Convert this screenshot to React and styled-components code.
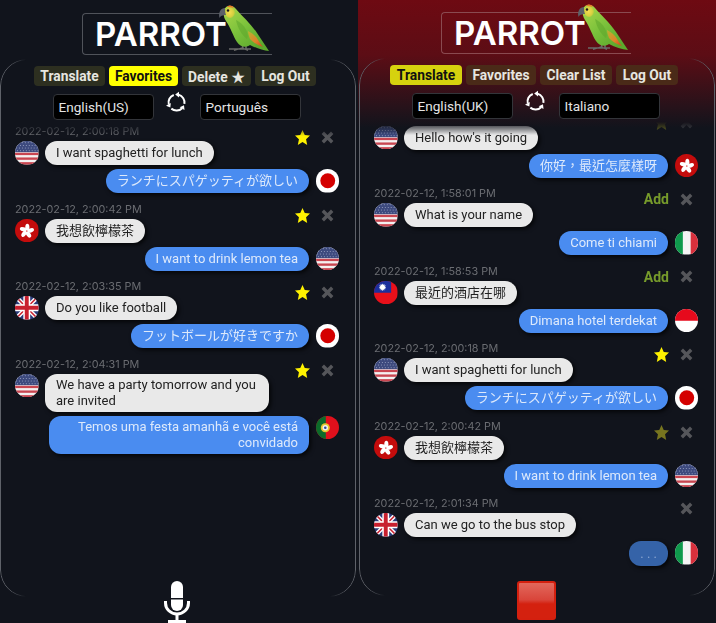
import styled, { createGlobalStyle } from "styled-components";

const GlobalStyle = createGlobalStyle`
  html, body {
    margin: 0;
    height: 623px;
    overflow: hidden;
    background: #11141c;
  }
  * {
    box-sizing: border-box;
  }
`;

const Page = styled.div`
  display: flex;
  width: 716px;
  height: 623px;
  font-family: Roboto, "Noto Sans CJK TC", sans-serif;
`;

const Panel = styled.div`
  width: 358px;
  height: 623px;
  overflow: hidden;
  display: flex;
  flex-direction: column;
  align-items: flex-start;
  padding-left: ${(p) => p.$inset}px;
  padding-top: ${(p) => p.$top}px;
  background: ${(p) =>
    p.$alert
      ? "linear-gradient(#6e0a12 0, #5c0d15 55px, #11141c 128px)"
      : "#11141c"};
`;

const Logo = styled.div`
  position: relative;
  width: 190px;
  height: 42px;
  margin-left: 82px;
  padding-left: 12px;
  display: flex;
  align-items: center;
  color: #fff;
  font-family: Inter, sans-serif;
  font-size: 33px;
  font-weight: 600;
  border: 1.5px solid ${(p) => (p.$alert ? "#8a4a50" : "#50535a")};
  border-right: 0;
  border-radius: 4px 0 0 4px;
`;

const ParrotArt = styled.svg`
  position: absolute;
  left: 135px;
  top: -10px;
`;

const Card = styled.div`
  position: relative;
  width: 356px;
  height: 538px;
  margin-top: 4px;
  padding: 7px 1px 0;
  display: flex;
  flex-direction: column;

  &::before {
    content: "";
    position: absolute;
    inset: 0;
    border: 1px solid #5f6269;
    border-radius: 27px;
    pointer-events: none;
    mask-image: linear-gradient(
      to right,
      #000 8px,
      transparent 26px,
      transparent calc(100% - 26px),
      #000 calc(100% - 8px)
    );
  }
`;

const Tabs = styled.div`
  display: flex;
  justify-content: center;
  gap: 4px;
  padding-right: 6px;
`;

const Tab = styled.div`
  height: 20px;
  width: ${(p) => p.$w}px;
  display: flex;
  align-items: center;
  justify-content: center;
  border-radius: 4px;
  font-size: 13.8px;
  font-weight: 700;
  white-space: nowrap;
  color: ${(p) => (p.$active ? "#111" : "#e6e6e0")};
  background: ${(p) => {
    if (p.$active) return p.$alert ? "#d6d20e" : "#ffff00";
    return p.$alert ? "#4a2a18" : "#2d2f20";
  }};
`;

const LangRow = styled.div`
  display: flex;
  justify-content: center;
  align-items: flex-start;
  gap: 11.5px;
  margin-top: 8px;
  padding-right: 3px;
`;

const LangBox = styled.div`
  width: 101px;
  height: 26px;
  padding-left: 5px;
  display: flex;
  align-items: center;
  background: #000;
  border: 1px solid #33353a;
  border-radius: 4px;
  color: #e4e4e4;
  font-size: 13.6px;
`;

const SwapIcon = styled.svg`
  margin-top: -3px;
`;

const List = styled.div`
  flex: 1;
  min-height: 0;
  margin-top: 3px;
  padding: 0 16px 0 14px;
  overflow: hidden;
  mask-image: linear-gradient(to bottom, transparent, #000 13px);
`;

const ListInner = styled.div`
  margin-top: ${(p) => p.$offset}px;
`;

const Entry = styled.div`
  margin-bottom: 8.5px;
`;

const EntryHead = styled.div`
  height: 14px;
  margin-bottom: 3px;
  display: flex;
  justify-content: space-between;
  align-items: flex-start;
`;

const Stamp = styled.div`
  margin-top: 1px;
  font-family: Inter, sans-serif;
  font-size: 10.8px;
  line-height: 14px;
  color: #6b6d72;
`;

const Actions = styled.div`
  display: flex;
  align-items: center;
  justify-content: flex-end;
  gap: 11px;
  margin-top: 6px;
  padding-right: 5px;
`;

const AddLink = styled.span`
  color: #769a2b;
  font-size: 14px;
  font-weight: 700;
  line-height: 14px;
`;

const Row = styled.div`
  display: flex;
  align-items: flex-start;
  gap: 6.5px;
  margin-bottom: 4px;
  justify-content: ${(p) => (p.$out ? "flex-end" : "flex-start")};
`;

const Bubble = styled.div`
  min-height: 24px;
  padding: 3px 11px;
  display: flex;
  align-items: center;
  font-size: 13px;
  line-height: 16px;
  border-radius: 12px;
  box-shadow: 2px 2px 4px rgba(0, 0, 0, 0.75);
  color: ${(p) => (p.$out ? "#dde9fb" : "#222")};
  background: ${(p) => (p.$out ? "#4a8cf0" : "#e9e9e9")};
  max-width: ${(p) => (p.$out ? 260 : 224)}px;
  text-align: ${(p) => (p.$out ? "right" : "left")};
`;

const TypingBubble = styled(Bubble)`
  height: 25px;
  padding: 0 11px;
  background: #3563a8;
  color: #8aa5d0;
`;

const FlagArt = styled.svg`
  flex: none;
  border-radius: 50%;
  display: block;
`;

const Control = styled.div`
  width: 354px;
  flex: none;
  display: flex;
  justify-content: center;
  margin-top: ${(p) => p.$lift}px;
`;

const StopButton = styled.div`
  width: 39px;
  height: 39px;
  border: 2px solid #d4200f;
  border-radius: 3px;
  background: linear-gradient(#e2685c 0, #d9453a 48%, #d4210f 60%, #d4210f);
`;

function UsFlag() {
  const stars = [];
  for (let r = 0; r < 4; r++) {
    for (let c = 0; c < 8; c++) {
      stars.push(<circle key={`${r}-${c}`} cx={1.5 + c * 3 + (r % 2)} cy={1.8 + r * 2.7} r="0.5" fill="#c8cfe6" />);
    }
  }
  return (
    <>
      <rect width="24" height="24" fill="#f4f0f0" />
      <rect y="12" width="24" height="2.4" fill="#c94550" />
      <rect y="16.8" width="24" height="2.4" fill="#c94550" />
      <rect y="21.6" width="24" height="2.4" fill="#c94550" />
      <rect width="24" height="11.4" fill="#3d4a7e" />
      {stars}
    </>
  );
}

function HkFlag() {
  return (
    <>
      <rect width="24" height="24" fill="#c40c0c" />
      {[0, 72, 144, 216, 288].map((a) => (
        <ellipse key={a} cx="12.6" cy="8.4" rx="2.1" ry="3.6" fill="#fff" transform={`rotate(${a} 12 12.3)`} />
      ))}
      <circle cx="12" cy="12.3" r="0.9" fill="#e88" />
    </>
  );
}

function GbFlag() {
  return (
    <>
      <rect width="24" height="24" fill="#2a3a78" />
      <path d="M0 0L24 24M24 0L0 24" stroke="#fff" strokeWidth="4.4" />
      <path d="M0 0L24 24M24 0L0 24" stroke="#c8202f" strokeWidth="1.6" />
      <path d="M12 0V24M0 12H24" stroke="#fff" strokeWidth="7" />
      <path d="M12 0V24M0 12H24" stroke="#c8202f" strokeWidth="4" />
    </>
  );
}

function PtFlag() {
  return (
    <>
      <rect width="24" height="24" fill="#e0101c" />
      <rect width="10" height="24" fill="#0b6b2a" />
      <circle cx="9.5" cy="12" r="4.6" fill="#e6c832" />
      <circle cx="9.5" cy="12" r="2.8" fill="#f2f2f2" />
      <circle cx="9.5" cy="12" r="1.3" fill="#2a4a9a" />
    </>
  );
}

function TwFlag() {
  return (
    <>
      <rect width="24" height="24" fill="#e8101a" />
      <rect width="17.5" height="12" fill="#1b2f9c" />
      {[0, 30, 60, 90, 120, 150].map((a) => (
        <rect key={a} x="5.2" y="6" width="7" height="0.8" fill="#fff" transform={`rotate(${a} 8.7 6.4)`} />
      ))}
      <circle cx="8.7" cy="6.4" r="2.5" fill="#fff" />
    </>
  );
}

const flagArt = {
  us: <UsFlag />,
  hk: <HkFlag />,
  gb: <GbFlag />,
  pt: <PtFlag />,
  tw: <TwFlag />,
  jp: (
    <>
      <rect width="24" height="24" fill="#fff" />
      <circle cx="12" cy="12" r="7.6" fill="#d40000" />
    </>
  ),
  id: (
    <>
      <rect width="24" height="24" fill="#fff" />
      <rect width="24" height="12" fill="#e60a1c" />
    </>
  ),
  it: (
    <>
      <rect width="24" height="24" fill="#f4f4f4" />
      <rect width="8" height="24" fill="#0f9a4c" />
      <rect x="16" width="8" height="24" fill="#d8303c" />
    </>
  ),
};

function Flag({ code }) {
  return (
    <FlagArt width="23.5" height="23.5" viewBox="0 0 24 24">
      {flagArt[code]}
    </FlagArt>
  );
}

function Star({ dim }) {
  return (
    <svg width="15" height="15" viewBox="0 0 24 24">
      <polygon
        points="12,0 15.6,8 24,8.8 17.7,14.6 19.5,24 12,19 4.5,24 6.3,14.6 0,8.8 8.4,8"
        fill={dim ? "#77751f" : "#fff200"}
      />
    </svg>
  );
}

function Cross() {
  return (
    <svg width="13" height="13" viewBox="0 0 13 13">
      <path d="M1.8 1.8L11.2 11.2M11.2 1.8L1.8 11.2" stroke="#55565a" strokeWidth="3.4" />
    </svg>
  );
}

function Parrot() {
  return (
    <ParrotArt width="54" height="50" viewBox="0 0 54 50">
      <defs>
        <linearGradient id="parrotBody" x1="0.1" y1="0" x2="0.8" y2="0.9">
          <stop offset="0" stopColor="#a8d648" />
          <stop offset="0.5" stopColor="#7cc23c" />
          <stop offset="1" stopColor="#5ca82c" />
        </linearGradient>
        <linearGradient id="parrotTail" x1="0" y1="0" x2="1" y2="1">
          <stop offset="0" stopColor="#b8b42e" />
          <stop offset="0.6" stopColor="#e0802a" />
          <stop offset="1" stopColor="#d0401e" />
        </linearGradient>
        <radialGradient id="parrotHead" cx="0.45" cy="0.5" r="0.6">
          <stop offset="0" stopColor="#f5dc50" />
          <stop offset="0.65" stopColor="#d8d040" />
          <stop offset="1" stopColor="#a4c83e" />
        </radialGradient>
      </defs>
      <path d="M11 45H33M16 46.5L24 44L30 46.5" stroke="#6a6a68" strokeWidth="1.3" fill="none" />
      <path d="M24 38L25 45M28 39L28 45" stroke="#6a6a68" strokeWidth="1.6" fill="none" />
      <path
        d="M6 6C8 1 14 0 18 5C24 12 33 20 39 29C43 35 47 41 51 47C45 46.5 38 44 32 41C28 44 22 43 19 38C15 32 13 24 8 17C6 14 5 10 6 6Z"
        fill="url(#parrotBody)"
      />
      <path d="M30 27C34 29 38 32 40 36C41.5 38.5 43 40.5 45 43C40 41.5 35 38.5 32 35C31 32 30 30 30 27Z" fill="url(#parrotTail)" />
      <path d="M18 16C22 18 27 22 29 28C30 31 30 33 29 35C25 32 20 26 18 16Z" fill="#5fa52c" opacity="0.55" />
      <path d="M7 8C8 3 13 1 16 5C18 8 17 12 13 14C10 14 7 12 7 8Z" fill="url(#parrotHead)" />
      <path d="M9 3C11 1 14 1 16 4C13 3 11 3 9 3Z" fill="#e8782a" />
      <path d="M7 4C3 4 0 8 1.5 14C3 11 6 11 8 11C7 9 7 6 7 4Z" fill="#5c6068" />
      <circle cx="10" cy="6.5" r="1.2" fill="#1b1b1b" />
    </ParrotArt>
  );
}

function SwapArrows() {
  return (
    <SwapIcon width="23" height="23" viewBox="-1 -1 23 23">
      {[0, 120, 240].map((a) => (
        <g key={a} transform={`rotate(${a} 10.5 10.5)`}>
          <path d="M12.6 2.8A8 8 0 0 1 18.4 11.9" stroke="#fff" strokeWidth="2" fill="none" />
          <polygon points="9.2,2.6 13,-0.2 13,5.4" fill="#fff" />
        </g>
      ))}
    </SwapIcon>
  );
}

function Mic() {
  return (
    <svg width="26" height="42" viewBox="0 0 26 42">
      <rect x="7" y="0" width="12" height="30" rx="6" fill="#fff" />
      <rect x="7" y="17" width="12" height="1.5" fill="#11141c" />
      <path d="M1.5 20V22A11.5 11 0 0 0 24.5 22V20" stroke="#fff" strokeWidth="3" fill="none" />
      <rect x="11.5" y="33" width="3" height="7" fill="#fff" />
      <rect x="4" y="39" width="18" height="3" fill="#fff" />
    </svg>
  );
}

const favorites = [
  {
    time: "2022-02-12, 2:00:18 PM",
    from: "us",
    text: "I want spaghetti for lunch",
    to: "jp",
    reply: "ランチにスパゲッティが欲しい",
    star: "on",
  },
  {
    time: "2022-02-12, 2:00:42 PM",
    from: "hk",
    text: "我想飲檸檬茶",
    to: "us",
    reply: "I want to drink lemon tea",
    star: "on",
  },
  {
    time: "2022-02-12, 2:03:35 PM",
    from: "gb",
    text: "Do you like football",
    to: "jp",
    reply: "フットボールが好きですか",
    star: "on",
  },
  {
    time: "2022-02-12, 2:04:31 PM",
    from: "us",
    text: "We have a party tomorrow and you are invited",
    to: "pt",
    reply: "Temos uma festa amanhã e você está convidado",
    star: "on",
  },
];

// first entry is scrolled, its time stamp is out of view
const history = [
  {
    time: "",
    from: "us",
    text: "Hello how's it going",
    to: "hk",
    reply: "你好，最近怎麼樣呀",
    star: "dim",
  },
  {
    time: "2022-02-12, 1:58:01 PM",
    from: "us",
    text: "What is your name",
    to: "it",
    reply: "Come ti chiami",
    star: "add",
  },
  {
    time: "2022-02-12, 1:58:53 PM",
    from: "tw",
    text: "最近的酒店在哪",
    to: "id",
    reply: "Dimana hotel terdekat",
    star: "add",
  },
  {
    time: "2022-02-12, 2:00:18 PM",
    from: "us",
    text: "I want spaghetti for lunch",
    to: "jp",
    reply: "ランチにスパゲッティが欲しい",
    star: "on",
  },
  {
    time: "2022-02-12, 2:00:42 PM",
    from: "hk",
    text: "我想飲檸檬茶",
    to: "us",
    reply: "I want to drink lemon tea",
    star: "dim",
  },
  {
    time: "2022-02-12, 2:01:34 PM",
    from: "gb",
    text: "Can we go to the bus stop",
    to: "it",
    typing: true,
  },
];

function MessageEntry({ item }) {
  return (
    <Entry>
      <EntryHead>
        <Stamp>{item.time}</Stamp>
        <Actions>
          {item.star === "on" && <Star />}
          {item.star === "dim" && <Star dim />}
          {item.star === "add" && <AddLink>Add</AddLink>}
          <Cross />
        </Actions>
      </EntryHead>
      <Row>
        <Flag code={item.from} />
        <Bubble>{item.text}</Bubble>
      </Row>
      <Row $out>
        {item.typing ? <TypingBubble $out>. . .</TypingBubble> : <Bubble $out>{item.reply}</Bubble>}
        <Flag code={item.to} />
      </Row>
    </Entry>
  );
}

function App() {
  return (
    <Page>
      <GlobalStyle />
      <Panel $inset={0} $top={13}>
        <Logo>
          PARROT
          <Parrot />
        </Logo>
        <Card>
          <Tabs>
            <Tab $w={71}>Translate</Tab>
            <Tab $w={69} $active>
              Favorites
            </Tab>
            <Tab $w={69}>Delete ★</Tab>
            <Tab $w={61}>Log Out</Tab>
          </Tabs>
          <LangRow>
            <LangBox>English(US)</LangBox>
            <SwapArrows />
            <LangBox>Português</LangBox>
          </LangRow>
          <List>
            <ListInner $offset={1}>
              {favorites.map((item) => (
                <MessageEntry key={item.time} item={item} />
              ))}
            </ListInner>
          </List>
        </Card>
        <Control $lift={-16}>
          <Mic />
        </Control>
      </Panel>
      <Panel $alert $inset={1} $top={12}>
        <Logo $alert>
          PARROT
          <Parrot />
        </Logo>
        <Card>
          <Tabs>
            <Tab $alert $w={72} $active>
              Translate
            </Tab>
            <Tab $alert $w={70}>
              Favorites
            </Tab>
            <Tab $alert $w={72}>
              Clear List
            </Tab>
            <Tab $alert $w={62}>
              Log Out
            </Tab>
          </Tabs>
          <LangRow>
            <LangBox>English(UK)</LangBox>
            <SwapArrows />
            <LangBox>Italiano</LangBox>
          </LangRow>
          <List>
            <ListInner $offset={-13.5}>
              {history.map((item) => (
                <MessageEntry key={item.text} item={item} />
              ))}
            </ListInner>
          </List>
        </Card>
        <Control $lift={-15}>
          <StopButton />
        </Control>
      </Panel>
    </Page>
  );
}

export default App;
